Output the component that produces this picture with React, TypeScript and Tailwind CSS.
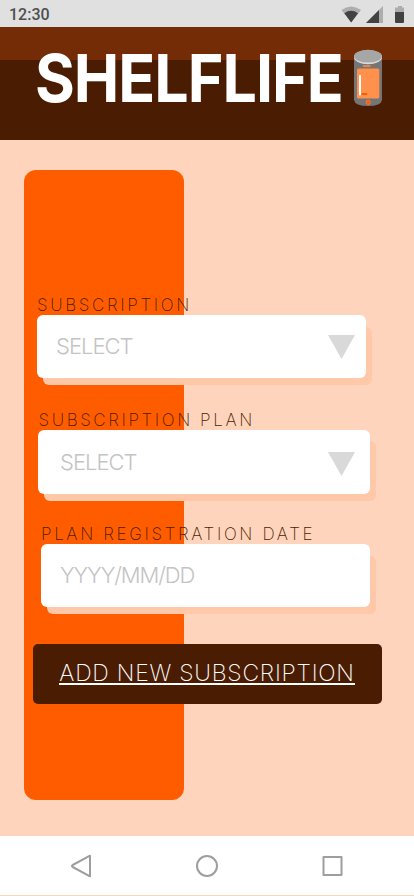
import React from 'react';

interface FieldProps {
  label: string;
  placeholder: string;
  select?: boolean;
  className: string;
  labelClass: string;
  boxClass: string;
  textClass: string;
  arrowClass?: string;
}

const StatusBar: React.FC = () => (
  <div className="h-[27px] bg-[#e0e0e0] flex items-center justify-between pl-[9px] pr-[9px] pt-[2px]">
    <span className="font-[Roboto] font-medium text-[16px] leading-none text-[#4f4f4f]">12:30</span>
    <svg width="64" height="18" viewBox="0 0 64 18">
      {/* wifi */}
      <path d="M0.5 4 Q10 -3 20 4 L10.2 16.5 Z" fill="#adadad" />
      <path d="M3.3 7.2 Q10.2 2.4 17 7.2 L10.2 16.5 Z" fill="#424242" />
      {/* signal */}
      <path d="M42 0 V17 H25 Z" fill="#adadad" />
      <path d="M38 4 V17 H25 Z" fill="#424242" />
      {/* battery */}
      <path d="M57 0 H61 V1.5 H63 V6 H54 V1.5 H57 Z" fill="#adadad" />
      <path d="M54 6 H63 V16 Q63 17 62 17 H55 Q54 17 54 16 Z" fill="#424242" />
    </svg>
  </div>
);

const CanLogo: React.FC = () => (
  <svg width="30" height="58" viewBox="0 0 30 58" className="mt-[0.5px]">
    <path d="M1 8 V51 Q2 57 15 57 Q28 57 29 51 V8 Z" fill="#757575" />
    <ellipse cx="15" cy="8.2" rx="14" ry="7" fill="#dcdcdc" />
    <ellipse cx="15" cy="7.2" rx="14" ry="6.4" fill="#a6a6a6" />
    <rect x="10" y="16.3" width="7.5" height="1.5" fill="#ff914d" />
    <rect x="19" y="16.3" width="1.8" height="1.5" fill="#e0560e" />
    <rect x="4" y="19.5" width="22.3" height="30" rx="1.5" fill="#ff914d" />
    <rect x="6" y="26" width="2" height="20.3" fill="#fff" />
    <rect x="8.4" y="44" width="6" height="2" rx="1" fill="#ff5c00" />
    <circle cx="15.2" cy="53.3" r="2.2" fill="#ff5c00" stroke="#ff914d" strokeWidth="0.5" />
  </svg>
);

const Field: React.FC<FieldProps> = ({ label, placeholder, select, className, labelClass, boxClass, textClass, arrowClass }) => (
  <div className={className}>
    <div className={`h-5 font-[250] text-[17px] leading-5 text-[#4a1d03] whitespace-nowrap ${labelClass}`}>{label}</div>
    <div className="grid">
      <div className="col-start-1 row-start-1 mt-[11.5px] -mb-[7.5px] ml-[5.5px] -mr-[6px] rounded-[6px] bg-[#ffc8a8]" />
      <div className={`col-start-1 row-start-1 z-10 rounded-[6px] bg-white flex items-center justify-between ${boxClass}`}>
        <span className={`font-light text-[22px] leading-none text-[#c4c4c4] ${textClass}`}>{placeholder}</span>
        {select && (
          <svg width="27" height="24" viewBox="0 0 27 24" className={arrowClass}>
            <path d="M0 0 H27 L13.5 24 Z" fill="#d9d9d9" />
          </svg>
        )}
      </div>
    </div>
  </div>
);

const NavBar: React.FC = () => (
  <div className="h-[59px] bg-white flex items-center justify-between pl-[70px] pr-[70px]">
    <svg width="24" height="24" viewBox="0 0 24 24" fill="none" stroke="#9e9e9e" strokeWidth="2" strokeLinejoin="round">
      <path d="M20 1.7 V22.3 L2.7 13 Q1.2 12 2.7 11 Z" />
    </svg>
    <svg width="24" height="24" viewBox="0 0 24 24" fill="none" stroke="#9e9e9e" strokeWidth="2">
      <circle cx="12" cy="12" r="10" />
    </svg>
    <svg width="24" height="24" viewBox="0 0 24 24" fill="none" stroke="#9e9e9e" strokeWidth="2" strokeLinejoin="round">
      <rect x="3.5" y="3" width="18" height="18" />
    </svg>
  </div>
);

const App: React.FC = () => {
  return (
    <div className="w-[414px] h-[896px] overflow-hidden bg-[#ffd4bc] flex flex-col font-[Inter,sans-serif]">
      <StatusBar />

      <header className="h-[113px] bg-linear-to-b from-[#732c06] from-[33px] to-[#4a1d03] to-[33px] pl-[35px] pt-[21px] flex items-start">
        <h1 className="w-[318px] text-[66px] leading-[60px] font-bold text-white tracking-[-1.1px] origin-left scale-x-[0.923] whitespace-nowrap">SHELFLIFE</h1>
        <CanLogo />
      </header>

      <main className="h-[696px] grid">
        {/* Accent panel behind the form */}
        <div className="col-start-1 row-start-1 w-[160px] h-[630px] mt-[30px] ml-[23.5px] rounded-[12px] bg-[#ff5c00]" />

        <form className="col-start-1 row-start-1 z-10 pt-[155.4px] flex flex-col">
          <Field
            label="SUBSCRIPTION"
            placeholder="SELECT"
            select
            className="ml-[37px] w-[328.5px]"
            labelClass="tracking-[2.65px]"
            boxClass="h-[62.6px] pl-[19px] pr-[11px]"
            textClass="tracking-[-1px] -mt-[1px]"
          />
          <Field
            label="SUBSCRIPTION PLAN"
            placeholder="SELECT"
            select
            className="ml-[38px] w-[332px] mt-8"
            labelClass="pl-[0.5px] tracking-[2.6px]"
            boxClass="h-[64px] pl-[22px] pr-[15.5px]"
            textClass="tracking-[-1px]"
            arrowClass="mt-[4px]"
          />
          <Field
            label="PLAN REGISTRATION DATE"
            placeholder="YYYY/MM/DD"
            className="ml-[41px] w-[329px] mt-[30.5px]"
            labelClass="tracking-[2.65px]"
            boxClass="h-[62.5px] pl-[19px]"
            textClass="tracking-[-1.1px] -mt-[1px]"
          />
          <button
            type="button"
            className="ml-[32.5px] mt-[37px] w-[349px] h-[60px] rounded-[5px] bg-[#4a1d03] flex items-start justify-center pt-[17px]"
          >
            <span className="h-[24px] font-[250] text-[23px] leading-[24px] tracking-[0.75px] text-white border-b-2 border-white whitespace-nowrap">
              ADD NEW SUBSCRIPTION
            </span>
          </button>
        </form>
      </main>

      <NavBar />
    </div>
  );
};

export default App;
